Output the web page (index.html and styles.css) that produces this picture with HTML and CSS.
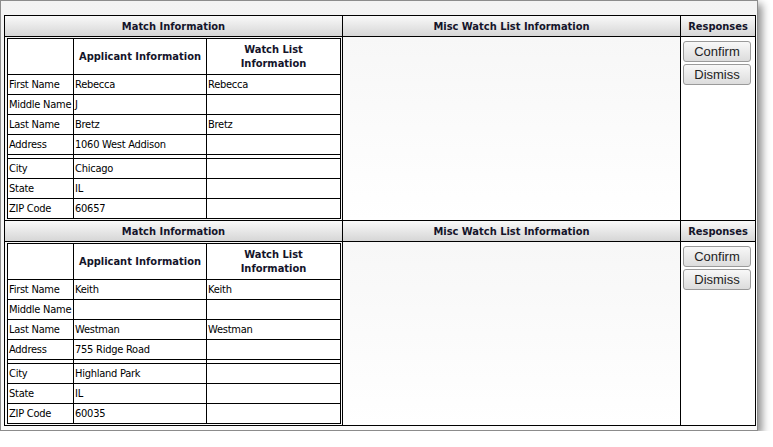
FILE: index.html
```html
<!DOCTYPE html>
<html lang="en">

<head>
    <meta charset="UTF-8">
    <meta name="viewport" content="width=device-width, initial-scale=1.0">
    <title>Watch List Matches</title>
    <link rel="stylesheet" href="styles.css">
</head>

<body>
    <div class="window">
        <table class="matches">
            <colgroup>
                <col class="col-match">
                <col class="col-misc">
                <col class="col-resp">
            </colgroup>

            <!-- match 1 -->
            <tr class="head-row">
                <th>Match Information</th>
                <th>Misc Watch List Information</th>
                <th>Responses</th>
            </tr>
            <tr>
                <td class="match-cell">
                    <table class="info">
                        <colgroup>
                            <col class="c-label">
                            <col class="c-app">
                            <col class="c-watch">
                        </colgroup>
                        <tr class="info-head">
                            <th></th>
                            <th>Applicant Information</th>
                            <th>Watch List<br>Information</th>
                        </tr>
                        <tr><td>First Name</td><td>Rebecca</td><td>Rebecca</td></tr>
                        <tr><td>Middle Name</td><td>J</td><td></td></tr>
                        <tr><td>Last Name</td><td>Bretz</td><td>Bretz</td></tr>
                        <tr><td>Address</td><td>1060 West Addison</td><td></td></tr>
                        <tr class="spacer"><td></td><td></td><td></td></tr>
                        <tr><td>City</td><td>Chicago</td><td></td></tr>
                        <tr><td>State</td><td>IL</td><td></td></tr>
                        <tr><td>ZIP Code</td><td>60657</td><td></td></tr>
                    </table>
                </td>
                <td class="misc-cell"></td>
                <td class="resp-cell">
                    <button class="btn">Confirm</button>
                    <button class="btn">Dismiss</button>
                </td>
            </tr>

            <!-- match 2 -->
            <tr class="head-row">
                <th>Match Information</th>
                <th>Misc Watch List Information</th>
                <th>Responses</th>
            </tr>
            <tr>
                <td class="match-cell">
                    <table class="info">
                        <colgroup>
                            <col class="c-label">
                            <col class="c-app">
                            <col class="c-watch">
                        </colgroup>
                        <tr class="info-head">
                            <th></th>
                            <th>Applicant Information</th>
                            <th>Watch List<br>Information</th>
                        </tr>
                        <tr><td>First Name</td><td>Keith</td><td>Keith</td></tr>
                        <tr><td>Middle Name</td><td></td><td></td></tr>
                        <tr><td>Last Name</td><td>Westman</td><td>Westman</td></tr>
                        <tr><td>Address</td><td>755 Ridge Road</td><td></td></tr>
                        <tr class="spacer"><td></td><td></td><td></td></tr>
                        <tr><td>City</td><td>Highland Park</td><td></td></tr>
                        <tr><td>State</td><td>IL</td><td></td></tr>
                        <tr><td>ZIP Code</td><td>60035</td><td></td></tr>
                    </table>
                </td>
                <td class="misc-cell"></td>
                <td class="resp-cell">
                    <button class="btn">Confirm</button>
                    <button class="btn">Dismiss</button>
                </td>
            </tr>
        </table>
    </div>
</body>

</html>
```

FILE: styles.css
```css
body {
    margin: 0;
    background-color: #fff;
    font-family: "DejaVu Sans Condensed", "DejaVu Sans", sans-serif;
    font-stretch: condensed;
    font-size: 11px;
    color: #000;
}

.window {
    width: 752px;
    height: 415px;
    padding: 14px 1px 0 3px;
    border: 1px solid #8c8c8c;
    background: linear-gradient(#f3f3f3, #fbfbfb);
    box-shadow: 4px 4px 8px rgba(0, 0, 0, 0.45);
}

/* outer table */
.matches {
    table-layout: fixed;
    width: 752px;
    border-collapse: separate;
    border-spacing: 0;
    border-left: 1px solid #000;
    border-top: 1px solid #000;
}

.col-match {
    width: 338px;
}

.col-misc {
    width: 338px;
}

.col-resp {
    width: 75px;
}

.matches > tbody > tr > th,
.matches > tbody > tr > td {
    border-right: 1px solid #000;
    border-bottom: 1px solid #000;
    padding: 0;
}

.head-row th {
    height: 19px;
    line-height: 19px;
    padding-top: 1px !important;
    box-sizing: border-box;
    font-weight: bold;
    color: #14142a;
    text-align: center;
    background: linear-gradient(#f9f9f9, #d6d6d6);
}

.match-cell {
    padding: 1px 1px 1px 2px !important;
    vertical-align: top;
}

.misc-cell {
    background: linear-gradient(#f7f7f7, #ffffff);
}

.resp-cell {
    vertical-align: top;
    background-color: #fff;
}

/* inner table */
.info {
    table-layout: fixed;
    width: 334px;
    border-collapse: separate;
    border-spacing: 0;
    border-left: 1px solid #000;
    border-top: 1px solid #000;
    background-color: #fff;
}

.c-label {
    width: 66px;
}

.c-app {
    width: 133px;
}

.c-watch {
    width: 134px;
}

.info th,
.info td {
    border-right: 1px solid #000;
    border-bottom: 1px solid #000;
    padding: 0 0 0 1px;
    white-space: nowrap;
    overflow: hidden;
}

.info td {
    height: 19px;
    padding-top: 1px;
    line-height: 18px;
    box-sizing: border-box;
    letter-spacing: -0.25px;
}

.info-head th {
    height: 35px;
    line-height: 14px;
    font-weight: bold;
    color: #14142a;
    text-align: center;
    vertical-align: middle;
    padding: 0;
}

.info .spacer td {
    height: 4px;
    line-height: 4px;
    padding: 0;
    font-size: 0;
}

/* buttons */
.btn {
    display: block;
    box-sizing: border-box;
    width: 68px;
    height: 21px;
    margin: 4px 0 0 2px;
    padding: 0;
    border: 1px solid #9a9a9a;
    border-radius: 3px;
    background: linear-gradient(#f8f8f8, #dcdcdc);
    font-family: "Liberation Sans", Arial, sans-serif;
    font-stretch: normal;
    font-size: 13px;
    color: #222;
    cursor: pointer;
}

.btn + .btn {
    margin-top: 2px;
}
```
